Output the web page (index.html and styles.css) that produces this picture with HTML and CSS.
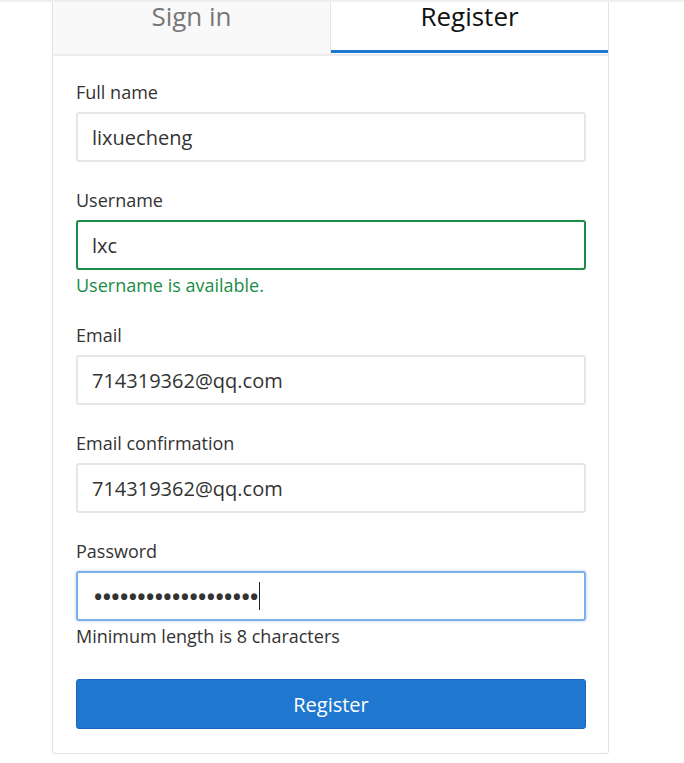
FILE: index.html
```html
<!DOCTYPE html>
<html lang="en">
<head>
<meta charset="utf-8">
<title>Register</title>
<link rel="stylesheet" href="styles.css">
</head>
<body>
<div class="topbar"></div>
<div class="card">
  <div class="tabs">
    <div class="tab">Sign in</div>
    <div class="tab active">Register</div>
  </div>
  <form class="form">
    <div class="group">
      <label class="label">Full name</label>
      <input class="input" type="text" value="lixuecheng">
    </div>
    <div class="group">
      <label class="label">Username</label>
      <input class="input valid" type="text" value="lxc">
      <div class="help success">Username is available.</div>
    </div>
    <div class="group">
      <label class="label">Email</label>
      <input class="input" type="text" value="714319362@qq.com">
    </div>
    <div class="group">
      <label class="label">Email confirmation</label>
      <input class="input" type="text" value="714319362@qq.com">
    </div>
    <div class="group">
      <label class="label">Password</label>
      <div class="input focused"><span class="dots">&#8226;&#8226;&#8226;&#8226;&#8226;&#8226;&#8226;&#8226;&#8226;&#8226;&#8226;&#8226;&#8226;&#8226;&#8226;&#8226;&#8226;&#8226;&#8226;</span><span class="caret"></span></div>
      <div class="help">Minimum length is 8 characters</div>
    </div>
    <button class="button" type="button">Register</button>
  </form>
</div>
</body>
</html>
```
FILE: styles.css
```css
* { box-sizing: border-box; }
html, body { margin: 0; padding: 0; background: #fff; }
body { font-family: "Open Sans", "Noto Sans", sans-serif; color: #333; }

.topbar { height: 2px; background: #efefef; }

.card {
  width: 557px;
  margin-left: 52px;
  border: 1px solid #e3e3e3;
  border-top: none;
  border-radius: 0 0 3px 3px;
}

.tabs {
  display: flex;
  border-bottom: 2px solid #ececec;
}
.tab {
  flex: 1 1 0;
  height: 52px;
  font-size: 26px;
  line-height: 28px;
  text-align: center;
  color: #777;
  background: #f9f9f9;
}
.tab:first-child { border-right: 1px solid #e6e6e6; flex: 0 0 278px; }
.tab.active {
  color: #111;
  background: #fff;
  border-bottom: 1px solid #fff;
  box-shadow: inset 0 -3px 0 #1f77d0;
}

.form {
  padding: 24px 22px 24px 23px;
  display: flex;
  flex-direction: column;
}
.group {
  display: flex;
  flex-direction: column;
  margin-bottom: 26px;
}
.group:last-of-type { margin-bottom: 31px; }

.label {
  display: block;
  font-size: 18px;
  line-height: 24px;
  margin-bottom: 8px;
  color: #333;
}
.input {
  display: flex;
  align-items: center;
  width: 510px;
  height: 50px;
  padding: 0 14px;
  border: 2px solid #e6e6e6;
  border-radius: 3px;
  font-family: "Open Sans", "Noto Sans", sans-serif;
  font-size: 20px;
  color: #333;
  background: #fff;
  outline: none;
}
.input.valid { border-color: #1b8c45; }
.input.focused {
  border-color: #7ab1ec;
  box-shadow: 0 0 3px rgba(31,119,208,0.35);
  padding-left: 16px;
}
.dots {
  font-size: 22px;
  font-weight: 700;
  letter-spacing: 0.4px;
  color: #333;
  line-height: 1;
}
.caret {
  display: inline-block;
  width: 1px;
  height: 28px;
  background: #222;
  margin-left: 0;
}

.help {
  font-size: 18px;
  line-height: 24px;
  margin-top: 3px;
  color: #333;
}
.help.success { color: #1b8c45; }

.button {
  height: 50px;
  width: 510px;
  border: 1px solid #1a66b8;
  border-radius: 3px;
  background: #1f77d0;
  color: #fff;
  font-family: "Open Sans", "Noto Sans", sans-serif;
  font-size: 20px;
  padding: 0;
}
```
